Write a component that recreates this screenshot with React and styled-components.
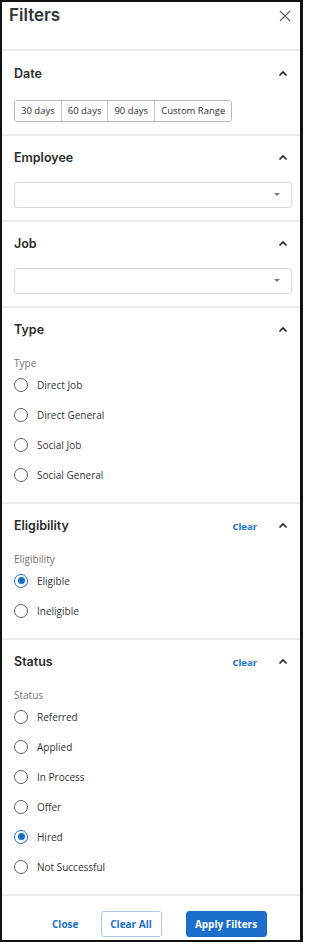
import React from 'react';
import styled, { createGlobalStyle } from 'styled-components';

const GlobalStyle = createGlobalStyle`
  body {
    margin: 0;
    background: #fff;
    font-family: "Open Sans", "Liberation Sans", sans-serif;
  }
`;

const BLUE = '#1b6fcb';

const Frame = styled.div`
  width: 303px;
  height: 942px;
  box-sizing: border-box;
  border: 2px solid #111;
  border-right-width: 3px;
  background: #fff;
  display: flex;
  flex-direction: column;
  overflow: hidden;
`;

const Header = styled.div`
  height: 47px;
  box-sizing: border-box;
  display: flex;
  justify-content: space-between;
  align-items: flex-start;
  padding: 1px 9px 0 7px;
`;

const Title = styled.h1`
  margin: 0;
  font-family: Inter, "Noto Sans", sans-serif;
  font-weight: 600;
  font-size: 17px;
  line-height: 24px;
  color: #333;
`;

const CloseButton = styled.button`
  border: none;
  background: none;
  padding: 0;
  margin-top: 7px;
  width: 12px;
  height: 12px;
  display: flex;
  cursor: pointer;
`;

const Section = styled.section`
  border-top: 2px solid #ececec;
  padding: 14px 8px 12px 12px;
`;

const SectionHead = styled.div`
  display: flex;
  align-items: center;
  height: 16px;
  margin-bottom: ${p => p.$gap}px;
`;

const Heading = styled.h2`
  flex: 1;
  margin: 0;
  font-family: Inter, "Noto Sans", sans-serif;
  font-weight: 600;
  font-size: 12.5px;
  color: #2a2a2a;
`;

const ClearLink = styled.a`
  font-weight: 700;
  font-size: 9.5px;
  color: ${BLUE};
  margin: 2px 21px 0 0;
  cursor: pointer;
`;

const ChevronBox = styled.span`
  display: flex;
  margin-right: 4px;
`;

const ButtonGroup = styled.div`
  display: inline-flex;
  height: 22px;
  box-sizing: border-box;
  border: 1px solid #b8b8b8;
  border-radius: 3px;
  overflow: hidden;
`;

const Segment = styled.button`
  border: none;
  border-left: ${p => (p.$first ? 'none' : '1px solid #c4c4c4')};
  background: #fff;
  padding: 0 6px;
  font-family: "Open Sans", sans-serif;
  font-weight: 500;
  font-size: 9.5px;
  color: #2e2e2e;
  cursor: pointer;
`;

const SelectBox = styled.div`
  height: 26px;
  box-sizing: border-box;
  border: 1px solid #d8d8d8;
  border-radius: 3px;
  display: flex;
  justify-content: flex-end;
  align-items: center;
  padding-right: 11px;
`;

const Caret = styled.span`
  width: 0;
  height: 0;
  border-left: 3.5px solid transparent;
  border-right: 3.5px solid transparent;
  border-top: 3.5px solid #7a7a7a;
`;

const FieldLabel = styled.div`
  font-size: 10px;
  line-height: 13px;
  color: #707070;
`;

const RadioRow = styled.label`
  height: 30px;
  display: flex;
  align-items: center;
  gap: 9px;
  font-size: 10px;
  color: #333;
  cursor: pointer;
`;

const RadioCircle = styled.span`
  width: 14px;
  height: 14px;
  box-sizing: border-box;
  border-radius: 50%;
  border: 1.5px solid ${p => (p.$checked ? BLUE : '#5f5f5f')};
  display: flex;
  align-items: center;
  justify-content: center;

  &::after {
    content: '';
    width: 7px;
    height: 7px;
    border-radius: 50%;
    background: ${p => (p.$checked ? BLUE : 'transparent')};
  }
`;

const Footer = styled.div`
  border-top: 2px solid #ececec;
  padding: 15px 0 0 50px;
  display: flex;
  align-items: center;
  gap: 22px;
`;

const TextButton = styled.button`
  border: none;
  background: none;
  padding: 0;
  font-family: "Open Sans", sans-serif;
  font-weight: 700;
  font-size: 10px;
  color: ${BLUE};
  cursor: pointer;
`;

const FooterButton = styled.button`
  height: 26px;
  width: ${p => p.$width}px;
  box-sizing: border-box;
  border-radius: 3px;
  border: 1px solid ${p => (p.$primary ? BLUE : '#a9c9ee')};
  background: ${p => (p.$primary ? BLUE : '#fff')};
  color: ${p => (p.$primary ? '#fff' : BLUE)};
  font-family: "Open Sans", sans-serif;
  font-weight: 700;
  font-size: 10px;
  padding: 0;
  margin-left: ${p => (p.$primary ? 2 : 0)}px;
  cursor: pointer;
`;

const Chevron = () => (
  <svg width="10" height="7" viewBox="0 0 10 7">
    <path d="M1.5 5.5 L5 2 L8.5 5.5" fill="none" stroke="#222" strokeWidth="1.6" />
  </svg>
);

const CloseIcon = () => (
  <svg width="12" height="12" viewBox="0 0 12 12">
    <path d="M1 1 L11 11 M11 1 L1 11" stroke="#666" strokeWidth="1.3" />
  </svg>
);

function SectionHeader({ title, clear, gap = 16 }) {
  return (
    <SectionHead $gap={gap}>
      <Heading>{title}</Heading>
      {clear && <ClearLink>Clear</ClearLink>}
      <ChevronBox><Chevron /></ChevronBox>
    </SectionHead>
  );
}

function RadioGroup({ title, label, options, selected, clear }) {
  return (
    <Section>
      <SectionHeader title={title} clear={clear} gap={19} />
      <FieldLabel>{label}</FieldLabel>
      {options.map(opt => (
        <RadioRow key={opt}>
          <RadioCircle $checked={opt === selected} />
          {opt}
        </RadioRow>
      ))}
    </Section>
  );
}

const ranges = ['30 days', '60 days', '90 days', 'Custom Range'];

export default function App() {
  return (
    <>
      <GlobalStyle />
      <Frame>
        <Header>
          <Title>Filters</Title>
          <CloseButton aria-label="Close"><CloseIcon /></CloseButton>
        </Header>

        <Section>
          <SectionHeader title="Date" />
          <ButtonGroup>
            {ranges.map((r, i) => (
              <Segment key={r} $first={i === 0}>{r}</Segment>
            ))}
          </ButtonGroup>
        </Section>

        <Section>
          <SectionHeader title="Employee" />
          <SelectBox><Caret /></SelectBox>
        </Section>

        <Section>
          <SectionHeader title="Job" />
          <SelectBox><Caret /></SelectBox>
        </Section>

        <RadioGroup
          title="Type"
          label="Type"
          options={['Direct Job', 'Direct General', 'Social Job', 'Social General']}
        />

        <RadioGroup
          title="Eligibility"
          label="Eligibility"
          options={['Eligible', 'Ineligible']}
          selected="Eligible"
          clear
        />

        <RadioGroup
          title="Status"
          label="Status"
          options={['Referred', 'Applied', 'In Process', 'Offer', 'Hired', 'Not Successful']}
          selected="Hired"
          clear
        />

        <Footer>
          <TextButton>Close</TextButton>
          <FooterButton $width={61}>Clear All</FooterButton>
          <FooterButton $width={81} $primary>Apply Filters</FooterButton>
        </Footer>
      </Frame>
    </>
  );
}
